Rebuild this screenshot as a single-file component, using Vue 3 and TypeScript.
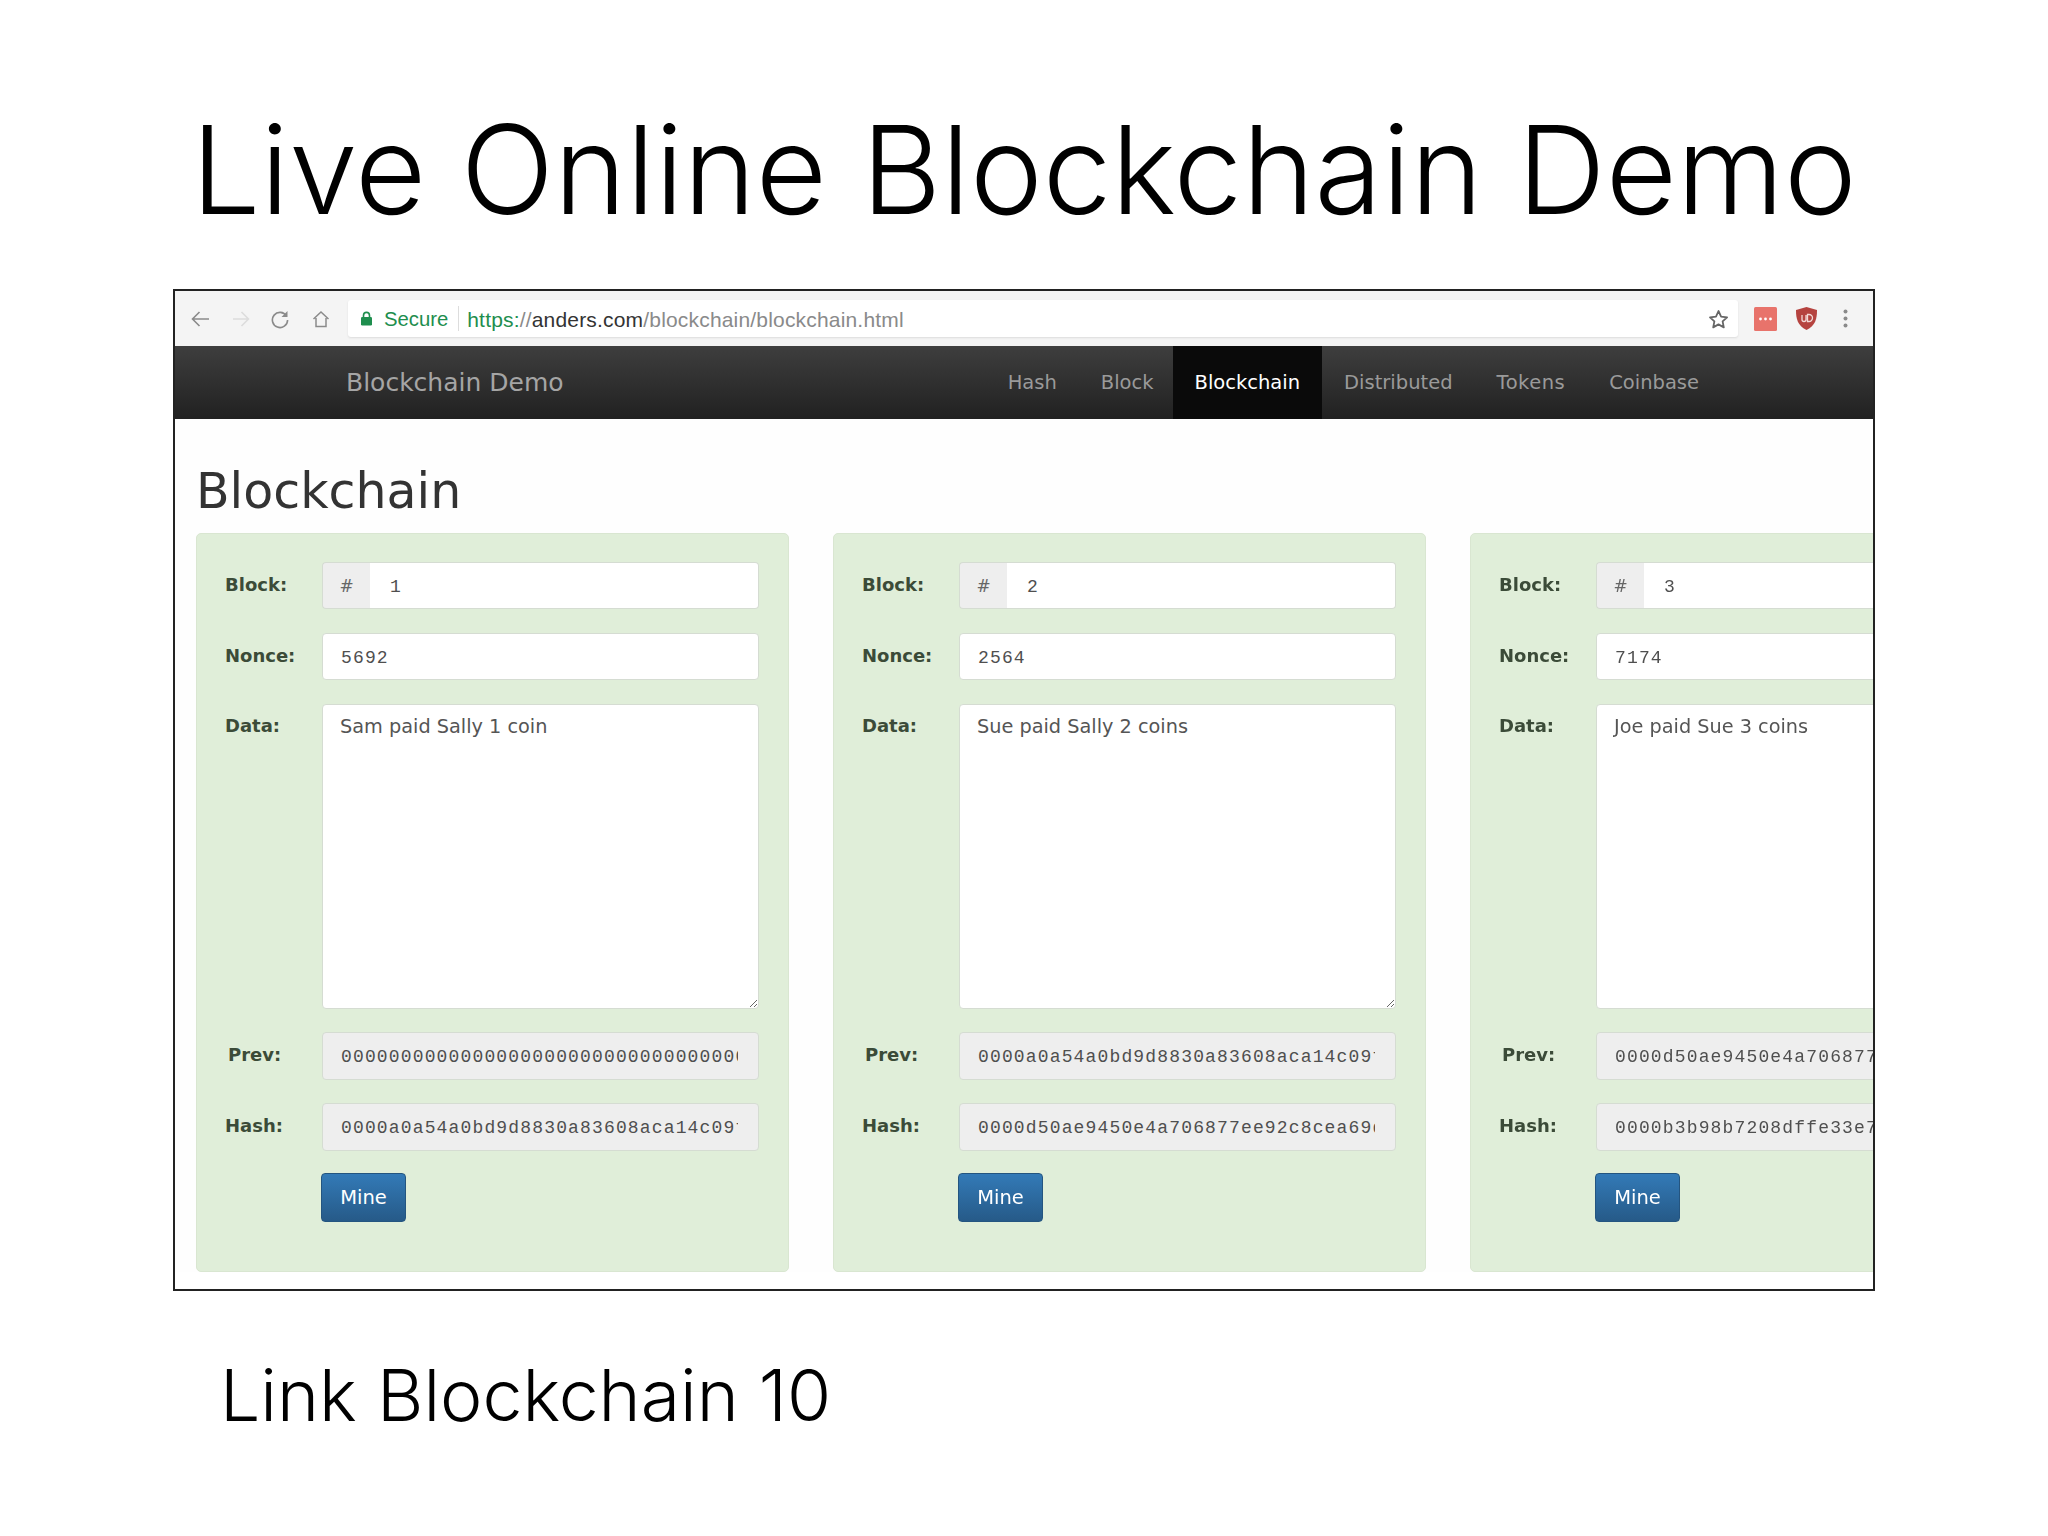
<script setup lang="ts">
interface Block {
  id: string
  nonce: string
  data: string
  prev: string
  hash: string
}

const navItems: string[] = ['Hash', 'Block', 'Blockchain', 'Distributed', 'Tokens', 'Coinbase']

const blocks: Block[] = [
  {
    id: '1',
    nonce: '5692',
    data: 'Sam paid Sally 1 coin',
    prev: '0000000000000000000000000000000000000000000000000000000000000000',
    hash: '0000a0a54a0bd9d8830a83608aca14c09f7b3a1e5c2d4f6a8b0c1d2e3f405162'
  },
  {
    id: '2',
    nonce: '2564',
    data: 'Sue paid Sally 2 coins',
    prev: '0000a0a54a0bd9d8830a83608aca14c09f7b3a1e5c2d4f6a8b0c1d2e3f405162',
    hash: '0000d50ae9450e4a706877ee92c8cea69d1b7c3e5f2a4d6081b3c5d7e9f01234'
  },
  {
    id: '3',
    nonce: '7174',
    data: 'Joe paid Sue 3 coins',
    prev: '0000d50ae9450e4a706877ee92c8cea69d1b7c3e5f2a4d6081b3c5d7e9f01234',
    hash: '0000b3b98b7208dffe33e7a1c4d92f60b8e13a57c9d02e46f1a8b3c7d5e90f12'
  }
]
</script>

<template>
  <main class="slide">
    <h1 class="title">Live Online Blockchain Demo</h1>

    <section class="frame">
      <div class="shot">
        <div class="toolbar">
          <svg class="tool" width="20" height="18" viewBox="0 0 20 18" fill="none" stroke="#8a8a8a" stroke-width="1.6">
            <path d="M19 9H3M9.5 2 2.500 9l7 7" />
          </svg>
          <svg class="tool fwd" width="18" height="18" viewBox="0 0 18 18" fill="none" stroke="#dcdcdc" stroke-width="1.6">
            <path d="M1 9h15M9.500 2l7 7-7 7" />
          </svg>
          <svg class="tool rel" width="20" height="20" viewBox="0 0 20 20" fill="none" stroke="#8a8a8a" stroke-width="1.6">
            <path d="M16.500 7A7.600 7.600 0 1 0 17.600 11" />
            <path d="M17.500 2v6h-6" fill="#8a8a8a" stroke="none" />
          </svg>
          <svg class="tool home" width="18" height="18" viewBox="0 0 18 18" fill="none" stroke="#8a8a8a" stroke-width="1.500">
            <path d="M1.500 9 9 2l7.500 7M4 8v8.500h10V8" />
          </svg>

          <div class="urlbar">
            <svg class="lock" width="13" height="15" viewBox="0 0 13 15">
              <path d="M3.500 6V4.400a3 3 0 0 1 6 0V6" fill="none" stroke="#1e8e4e" stroke-width="1.600" />
              <rect x="1" y="6" width="11" height="8.500" rx="1.200" fill="#1e8e4e" />
            </svg>
            <span class="secure">Secure</span>
            <span class="sep"></span>
            <span class="url"><span class="scheme">https:</span><span class="path">//</span><span class="host">anders.com</span><span class="path">/blockchain/blockchain.html</span></span>
            <svg class="star" width="21" height="20" viewBox="0 0 21 20" fill="none" stroke="#666" stroke-width="1.800" stroke-linejoin="round">
              <path d="M10.500 2l2.600 5.600 6 .7-4.500 4.100 1.200 6-5.300-3-5.300 3 1.200-6L2 8.300l6-.7z" />
            </svg>
          </div>

          <svg class="ext" width="23" height="24" viewBox="0 0 23 24">
            <rect width="23" height="24" rx="1.500" fill="#e8736b" />
            <circle cx="6.500" cy="12" r="1.400" fill="#fff" />
            <circle cx="11.500" cy="12" r="1.400" fill="#fff" />
            <circle cx="16.500" cy="12" r="1.400" fill="#fff" />
          </svg>
          <svg class="ext shield" width="21" height="23" viewBox="0 0 21 23">
            <path d="M10.500 0 21 3c0 9-1.500 15.500-10.500 20C1.500 18.500 0 12 0 3z" fill="#b5433f" />
            <path d="M6 8v4.500a2 2 0 0 0 4 0V8M11.500 7.500v7h1.500a3.500 3.500 0 0 0 0-7z" fill="none" stroke="#f3d9d6" stroke-width="1.300" />
          </svg>
          <svg class="kebab" width="5" height="19" viewBox="0 0 5 19" fill="#8a8a8a">
            <circle cx="2.500" cy="2.500" r="2" />
            <circle cx="2.500" cy="9.500" r="2" />
            <circle cx="2.500" cy="16.500" r="2" />
          </svg>
        </div>

        <nav class="navbar">
          <span class="brand">Blockchain Demo</span>
          <ul class="menu">
            <li v-for="item in navItems" :key="item" :class="{ active: item === 'Blockchain' }">{{ item }}</li>
          </ul>
        </nav>

        <div class="page">
          <h2 class="heading">Blockchain</h2>
          <div class="cards">
            <article v-for="b in blocks" :key="b.id" class="card">
              <div class="row">
                <label class="lab">Block:</label>
                <div class="group">
                  <span class="addon">#</span>
                  <input class="field mono joined" :value="b.id" readonly />
                </div>
              </div>
              <div class="row">
                <label class="lab">Nonce:</label>
                <input class="field mono" :value="b.nonce" readonly />
              </div>
              <div class="row">
                <label class="lab top">Data:</label>
                <textarea class="area" :value="b.data"></textarea>
              </div>
              <div class="row">
                <label class="lab prev">Prev:</label>
                <input class="field mono off" :value="b.prev" disabled />
              </div>
              <div class="row">
                <label class="lab">Hash:</label>
                <input class="field mono off" :value="b.hash" disabled />
              </div>
              <button class="mine" type="button">Mine</button>
            </article>
          </div>
        </div>
      </div>
    </section>

    <p class="caption">Link Blockchain 10</p>
  </main>
</template>

<style scoped>
.slide {
  width: 2048px;
  height: 1536px;
  background: #fff;
  display: flex;
  flex-direction: column;
  overflow: hidden;
}
.title {
  margin: 0;
  height: 289px;
  padding-top: 95px;
  box-sizing: border-box;
  text-align: center;
  font: 300 122.800px/150px Inter, "Liberation Sans", sans-serif;
  color: #000;
  white-space: nowrap;
}
.frame {
  margin-left: 173px;
  width: 1702px;
  height: 1002px;
  box-sizing: border-box;
  border: 2px solid #222;
  overflow: hidden;
  flex: none;
}
.shot {
  height: 100%;
  filter: blur(0.5px);
  font-family: "DejaVu Sans", sans-serif;
}
.toolbar {
  height: 55px;
  box-sizing: border-box;
  background: #f4f4f4;
  display: flex;
  align-items: center;
  padding: 0 0 0 15px;
}
.tool { flex: none; }
.fwd { margin-left: 22px; }
.rel { margin-left: 20px; }
.home { margin-left: 22px; }
.urlbar {
  margin-left: 18px;
  width: 1390px;
  height: 37px;
  box-sizing: border-box;
  background: #fff;
  border-radius: 3px;
  box-shadow: 0 1px 2px #dcdcdc;
  display: flex;
  align-items: center;
  padding: 0 9px 0 12px;
  font: 20.300px/1 "Liberation Sans", sans-serif;
  flex: none;
}
.secure { color: #1e8e4e; margin-left: 11px; padding-top: 2px; }
.sep { width: 1px; height: 25px; background: #ddd; margin: 0 8px 0 10px; }
.url { white-space: nowrap; flex: 1; font-size: 21px; letter-spacing: 0.180px; padding-top: 2px; }
.scheme { color: #1e8e4e; }
.path { color: #8a8a8a; }
.host { color: #333; }
.ext { margin-left: 16px; flex: none; }
.shield { margin-left: 19px; }
.kebab { margin-left: 26px; flex: none; }

.navbar {
  height: 73px;
  background: linear-gradient(#3e3e3e, #212121);
  display: flex;
  align-items: stretch;
  padding-left: 171px;
  padding-right: 152px;
}
.brand {
  align-self: center;
  font-size: 25px;
  color: #a5a5a5;
}
.menu {
  list-style: none;
  display: flex;
  margin: 0 0 0 auto;
  padding: 0;
}
.menu li {
  display: flex;
  align-items: center;
  padding: 0 22px;
  font-size: 19.500px;
  color: #9a9a9a;
}
.menu li.active {
  margin-left: -3px;
  background: #0a0a0a;
  color: #fff;
}
.menu li:nth-child(5) {
  letter-spacing: 0.500px;
}

.page {
  background: #fefefe;
  padding: 0 0 0 21px;
}
.heading {
  margin: 0;
  height: 114px;
  padding-top: 41px;
  box-sizing: border-box;
  font-weight: 400;
  font-size: 49px;
  line-height: 64px;
  color: #333;
}
.cards {
  display: flex;
  gap: 44px;
  width: 2200px;
}
.card {
  width: 593px;
  height: 739px;
  flex: none;
  box-sizing: border-box;
  padding: 28px 28px 0 28px;
  background: #e0eed9;
  border: 1px solid #d9e6d1;
  border-radius: 5px;
  display: flex;
  flex-direction: column;
  gap: 24px;
}
.row {
  display: flex;
  align-items: center;
}
.lab {
  width: 97px;
  flex: none;
  font-weight: 700;
  font-size: 18px;
  color: #3b4b38;
  margin-top: -3px;
}
.lab.top {
  align-self: flex-start;
  margin-top: 11px;
}
.lab.prev { padding-left: 3px; width: 94px; }
.group {
  display: flex;
  width: 437px;
  flex: none;
  height: 47px;
}
.addon {
  width: 48px;
  flex: none;
  background: #eee;
  border: 1px solid #d5dcd2;
  border-right: 0;
  border-radius: 4px 0 0 4px;
  box-sizing: border-box;
  display: flex;
  align-items: center;
  justify-content: center;
  color: #666;
  font-size: 17px;
}
.field {
  width: 437px;
  height: 47px;
  flex: none;
  box-sizing: border-box;
  border: 1px solid #d5dcd2;
  border-radius: 4px;
  background: #fff;
  padding: 2px 20px 0 18px;
  color: #4f4f4f;
  outline: none;
}
.joined {
  width: 389px;
  border-left: 0;
  border-radius: 0 4px 4px 0;
  padding-left: 20px;
}
.mono {
  font-family: "Liberation Mono", monospace;
  font-size: 18px;
  letter-spacing: 1.150px;
}
.off {
  height: 48px;
  margin-bottom: -1px;
  background: #eee;
  opacity: 1;
  color: #4f4f4f;
}
.area {
  width: 437px;
  height: 305px;
  margin-bottom: -1px;
  flex: none;
  box-sizing: border-box;
  border: 1px solid #d5dcd2;
  border-radius: 4px;
  background: #fff;
  padding: 10px 17px;
  font-family: "DejaVu Sans", sans-serif;
  font-size: 19.300px;
  line-height: 24px;
  color: #555;
  outline: none;
}
.mine {
  align-self: flex-start;
  margin: -1px 0 0 96px;
  width: 85px;
  height: 49px;
  border: 1px solid #245580;
  border-radius: 4px;
  background: linear-gradient(#337ab7, #265a88);
  color: #fff;
  font-family: "DejaVu Sans", sans-serif;
  font-size: 19.500px;
  padding: 0;
}
.caption {
  margin: 59px 0 0 220px;
  font: 300 71.500px/90px Inter, "Liberation Sans", sans-serif;
  color: #000;
}
</style>
